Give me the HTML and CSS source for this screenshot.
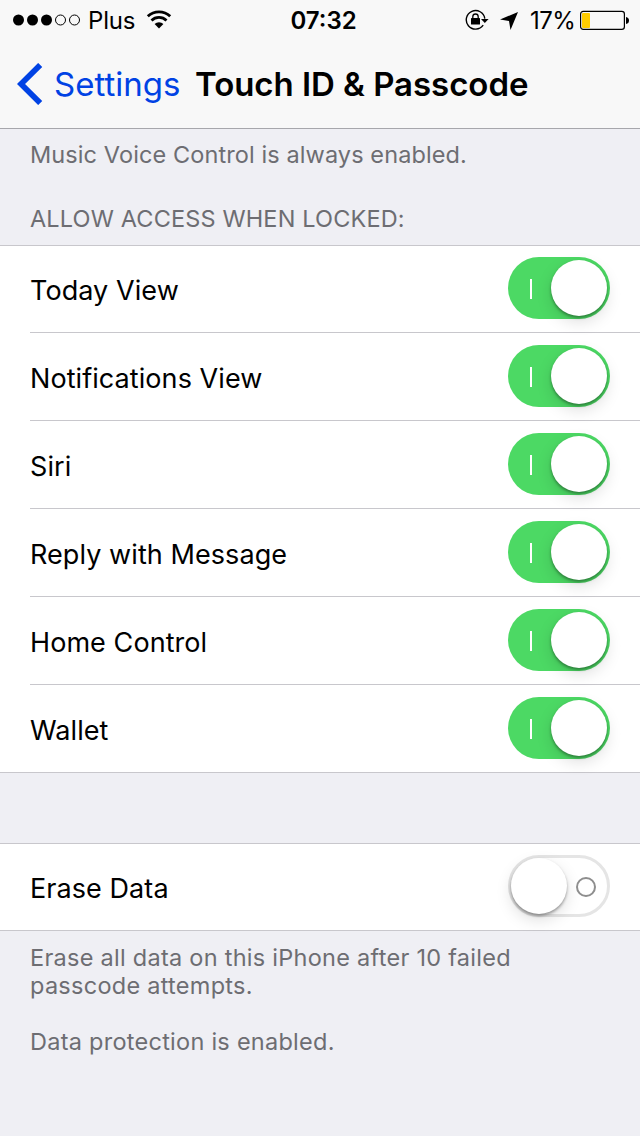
FILE: index.html
```html
<!DOCTYPE html>
<html lang="en">
<head>
<meta charset="utf-8">
<title>Touch ID &amp; Passcode</title>
<link rel="stylesheet" href="styles.css">
</head>
<body>
<header class="header">
  <div class="status">
    <div class="status-left">
      <svg class="signal" width="68" height="12" viewBox="0 0 68 12"><g fill="#000"><circle cx="5.5" cy="6" r="5.5"/><circle cx="19.5" cy="6" r="5.5"/><circle cx="33.5" cy="6" r="5.5"/></g><g fill="none" stroke="#000"><circle cx="47.5" cy="6" r="5"/><circle cx="61.5" cy="6" r="5"/></g></svg>
      <span class="carrier">Plus</span>
      <svg class="wifi" width="26" height="20" viewBox="0 0 26 20"><g fill="none" stroke="#000" stroke-width="2.8"><path d="M1.8 7.3a16.2 16.2 0 0 1 22.4 0"/><path d="M5.5 11.5a10.8 10.8 0 0 1 15 0"/></g><path d="M8.6 15a6.2 6.2 0 0 1 8.8 0L13 19.4z"/></svg>
    </div>
    <span class="time">07:32</span>
    <div class="status-right">
      <svg class="lock" width="24" height="22" viewBox="0 0 24 22"><path d="M18.2 16.2A9.3 9.3 0 1 1 19.8 9.6" fill="none" stroke="#000" stroke-width="1.4"/><path d="M16 10h7.6l-3.8 4z"/><rect x="6" y="9" width="9" height="6.5" rx=".6"/><path d="M7.8 9.5V7.7a2.7 2.7 0 0 1 5.4 0v1.8" fill="none" stroke="#000" stroke-width="1.3"/></svg>
      <svg class="location" width="18" height="18" viewBox="0 0 18 18"><path d="M18 0 10.5 18 9 9 0 7.5z"/></svg>
      <span class="percent">17%</span>
      <svg class="battery" width="50" height="20" viewBox="0 0 50 20"><rect x=".6" y="1.3" width="43.8" height="18" rx="2.6" fill="none" stroke="#000" stroke-width="1.2"/><rect x="2" y="3" width="8" height="15" rx="1" fill="#fc0"/><path d="M46 7q3 .5 3 3.5t-3 3.5z"/></svg>
    </div>
  </div>
  <nav class="nav">
    <svg class="chevron" width="26" height="42" viewBox="0 0 26 42"><path d="M23.2 2 4 21l19.2 19" fill="none" stroke="#0042e4" stroke-width="5.8"/></svg>
    <a class="back">Settings</a>
    <h1 class="title">Touch ID &amp; Passcode</h1>
  </nav>
</header>
<main>
  <p class="note intro">Music Voice Control is always enabled.</p>
  <h2 class="note heading">ALLOW ACCESS WHEN LOCKED:</h2>
  <ul class="list">
    <li class="row"><span class="label">Today View</span><span class="switch on"><i class="knob"></i></span></li>
    <li class="row"><span class="label">Notifications View</span><span class="switch on"><i class="knob"></i></span></li>
    <li class="row"><span class="label">Siri</span><span class="switch on"><i class="knob"></i></span></li>
    <li class="row"><span class="label">Reply with Message</span><span class="switch on"><i class="knob"></i></span></li>
    <li class="row"><span class="label">Home Control</span><span class="switch on"><i class="knob"></i></span></li>
    <li class="row"><span class="label">Wallet</span><span class="switch on"><i class="knob"></i></span></li>
  </ul>
  <ul class="list erase">
    <li class="row"><span class="label">Erase Data</span><span class="switch off"><i class="knob"></i></span></li>
  </ul>
  <p class="note footer">Erase all data on this iPhone after 10 failed<br>passcode attempts.</p>
  <p class="note protection">Data protection is enabled.</p>
</main>
</body>
</html>
```
FILE: styles.css
```css
*, *::before, *::after { box-sizing: border-box; }
body {
  margin: 0;
  width: 640px;
  height: 1136px;
  overflow: hidden;
  background: #efeff4;
  color: #000;
  font-family: Inter, "Liberation Sans", sans-serif;
}
svg { display: block; flex: none; }
h1, h2, p, ul { margin: 0; padding: 0; font-weight: 400; }
span, a, h1 { white-space: nowrap; }

.header { height: 129px; background: #f8f8f8; border-bottom: 1px solid #a7a7ac; }
.status { display: flex; height: 40px; padding: 0 10px 0 13px; font-size: 24px; line-height: 41px; }
.status-left { display: flex; width: 278px; }
.signal { margin-top: 14px; }
.carrier { width: 46px; margin-left: 7px; letter-spacing: -0.2px; }
.wifi { margin: 9px 0 0 12px; }
.time { width: 175px; font-weight: 600; font-size: 24px; }
.status-right { display: flex; }
.lock { margin-top: 9px; }
.location { margin: 12px 0 0 11px; }
.percent { width: 45px; margin-left: 12px; letter-spacing: -0.6px; }
.battery { margin: 10px 0 0 5px; }

.nav { display: flex; height: 88px; padding-left: 17px; font-size: 33px; line-height: 88px; }
.chevron { margin-top: 23px; }
.back { width: 127px; margin-left: 11px; color: #0042e4; }
.title { margin-left: 14px; font-size: 33px; font-weight: 600; letter-spacing: -0.05px; }

.note { padding: 0 30px; color: #6d6d72; font-size: 23.5px; line-height: 28px; }
.intro { padding-top: 12px; letter-spacing: 0.1px; }
.heading { padding-top: 36px; height: 76px; letter-spacing: 0.15px; }

.list { list-style: none; background: #fff; border: 1px solid #c8c7cc; border-width: 1px 0; }
.row { display: flex; justify-content: space-between; height: 88px; margin-left: 30px; padding-right: 30px; border-bottom: 1px solid #c8c7cc; }
.row:first-child { height: 87px; }
.row:first-child .switch { margin-top: 11px; }
.row:first-child .label { padding-top: 2px; }
.row:last-child { height: 87px; border-bottom: 0; }
.erase { margin-top: 70px; }
.erase .row:last-child { height: 86px; }
.label { padding-top: 3px; font-size: 27px; line-height: 86px; letter-spacing: 0.07px; }
.switch { position: relative; width: 102px; height: 62px; margin-top: 12px; border-radius: 31px; }
.on { background: #4cd964; }
.off { border: 3px solid #e5e5e5; }
.knob { position: absolute; top: 3px; right: 3px; width: 56px; height: 56px; border-radius: 50%; background: #fff; box-shadow: 0 2px 3px rgba(0,0,0,.35), 0 6px 16px rgba(0,0,0,.13); }
.off .knob { top: 0; left: 0; }
.on::before { content: ""; position: absolute; left: 22px; top: 22px; width: 2px; height: 20px; background: #fff; }
.off::after { content: ""; position: absolute; left: 65px; top: 19px; width: 20px; height: 20px; border: 2px solid #8e8e8e; border-radius: 50%; }
.footer { padding-top: 13px; letter-spacing: 0.27px; }
.protection { padding-top: 28px; letter-spacing: 0.26px; }
```
